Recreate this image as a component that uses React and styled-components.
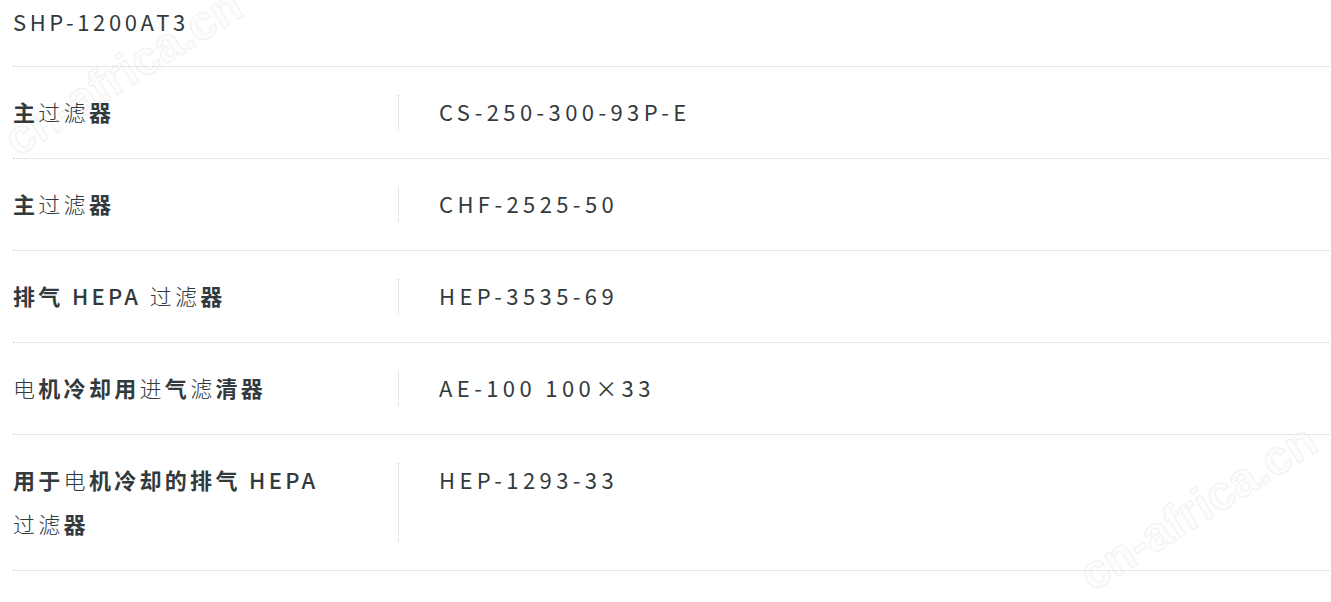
import React from 'react'
import styled, { createGlobalStyle } from 'styled-components'

const COLOR = {
  TEXT: '#333a3d',
  RULE: '#cfcfcf',
  DIVIDER: '#c2ccd8',
  MARK: '#f1f1f1',
}

const GlobalStyle = createGlobalStyle`
  body {
    margin: 0;
    background: #ffffff;
    color: ${COLOR.TEXT};
    font-family: "Noto Sans CJK SC", "Noto Sans", sans-serif;
  }
`

const Page = styled.div`
  position: relative;
  height: 602px;
  overflow: hidden;
  padding: 0 2px 0 13px;
`

const Title = styled.h2`
  position: relative;
  z-index: 1;
  margin: 0;
  padding-bottom: 24px;
  border-bottom: 1px dotted ${COLOR.RULE};
  font-size: 22px;
  font-weight: 400;
  line-height: 42px;
  letter-spacing: 3.6px;
`

const Row = styled.div`
  position: relative;
  z-index: 1;
  display: grid;
  grid-template-columns: 386px 1fr;
  align-items: start;
  padding: 28px 0;
  border-bottom: 1px dotted ${COLOR.RULE};
  font-size: 22px;
  line-height: 44px;
`

const Label = styled.div`
  position: relative;
  margin: -6px 0 -3px;
  padding-right: 8px;
  font-weight: 700;
  letter-spacing: 3.3px;
  word-break: keep-all;

  &::after {
    content: '';
    position: absolute;
    top: 6px;
    bottom: 3px;
    right: 0;
    border-right: 1px dotted ${COLOR.DIVIDER};
  }
`

const Light = styled.span`
  font-weight: ${(p) => (p.medium ? 500 : 300)};
`

const Value = styled.div`
  margin: -6px 0 -3px;
  padding-left: 40px;
  font-weight: 400;
  letter-spacing: 4.4px;
`

const Watermark = styled.div`
  position: absolute;
  z-index: 0;
  left: ${(p) => p.left}px;
  top: ${(p) => p.top}px;
  transform: rotate(-32deg);
  transform-origin: left top;
  font-family: "Liberation Sans", Arial, sans-serif;
  font-size: 48px;
  font-weight: 700;
  color: #fdfdfd;
  -webkit-text-stroke: 1px ${COLOR.MARK};
  pointer-events: none;
  white-space: nowrap;
`

const ROWS = [
  {
    label: (
      <>
        主<Light>过滤</Light>器
      </>
    ),
    value: 'CS-250-300-93P-E',
  },
  {
    label: (
      <>
        主<Light>过滤</Light>器
      </>
    ),
    value: 'CHF-2525-50',
  },
  {
    label: (
      <>
        排气 <Light medium>HEPA</Light> <Light>过滤</Light>器
      </>
    ),
    value: 'HEP-3535-69',
  },
  {
    label: (
      <>
        <Light>电</Light>机冷却用<Light>进</Light>气<Light>滤</Light>清器
      </>
    ),
    value: 'AE-100 100×33',
  },
  {
    label: (
      <>
        用于<Light>电</Light>机冷却的排气 <Light medium>HEPA</Light> <Light>过滤</Light>器
      </>
    ),
    value: 'HEP-1293-33',
  },
]

export default function App() {
  return (
    <>
      <GlobalStyle />
      <Page>
        <Watermark left={-6} top={120}>cn-africa.cn</Watermark>
        <Watermark left={1069} top={555}>cn-africa.cn</Watermark>
        <Title>SHP-1200AT3</Title>
        {ROWS.map((row, i) => (
          <Row key={i}>
            <Label>{row.label}</Label>
            <Value>{row.value}</Value>
          </Row>
        ))}
      </Page>
    </>
  )
}
